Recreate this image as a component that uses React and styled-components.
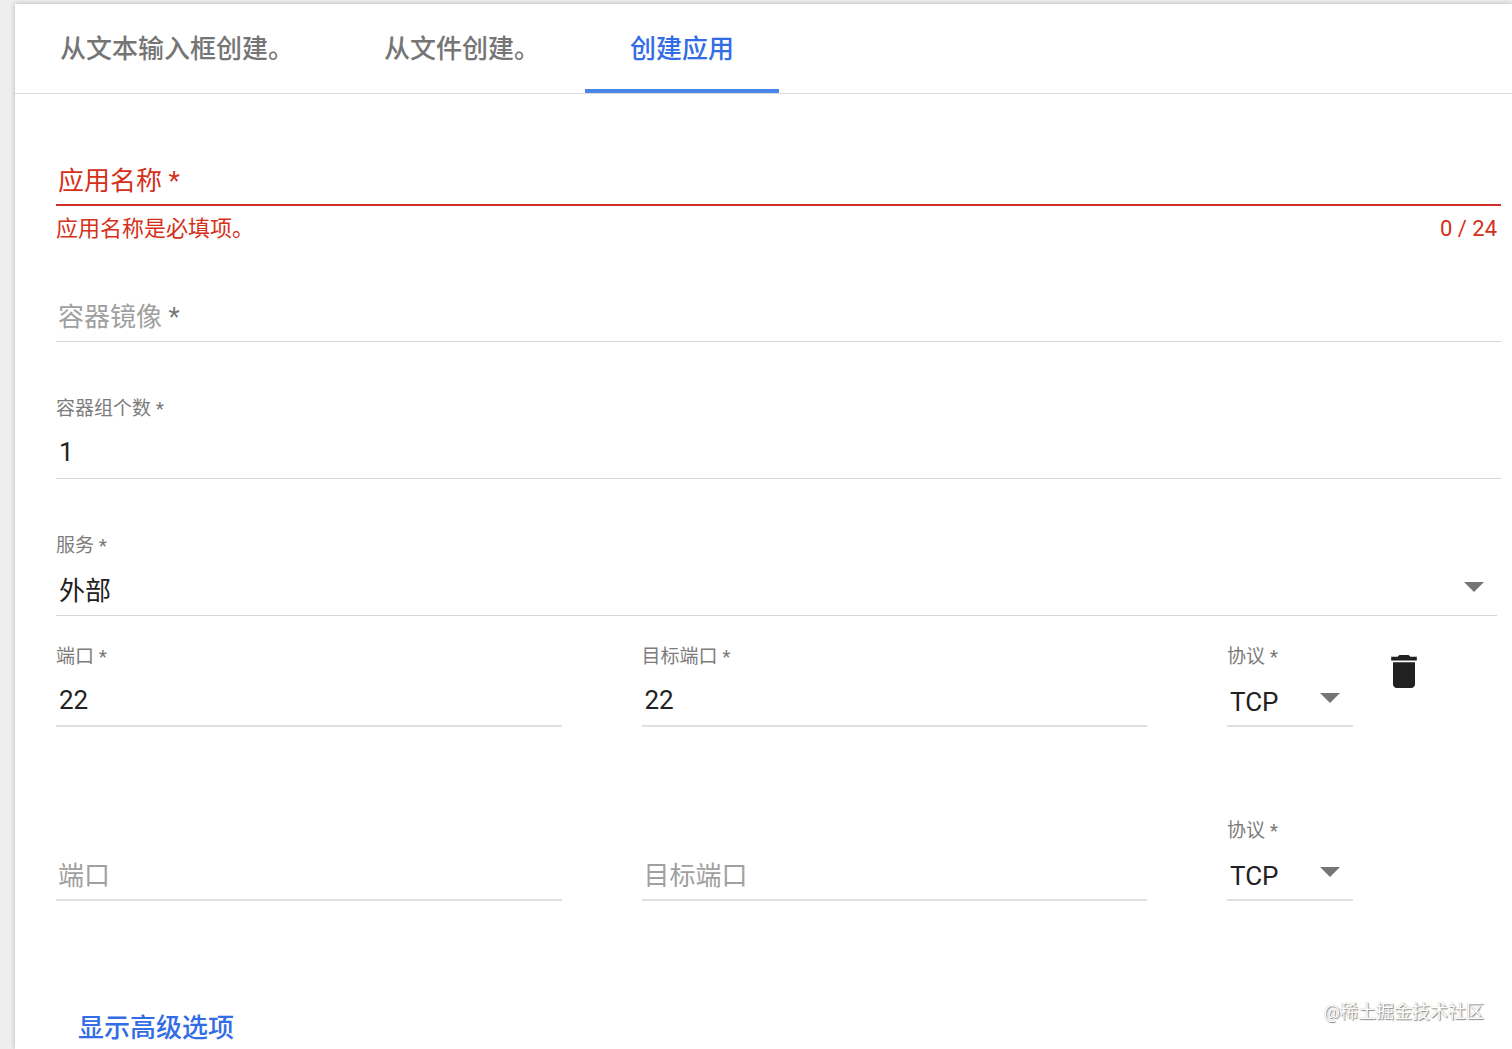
import React, { useState } from "react";
import styled, { createGlobalStyle, css } from "styled-components";

const GlobalStyle = createGlobalStyle`
  *, *::before, *::after { box-sizing: border-box; }
  body {
    margin: 0;
    background: #eeeeee;
    color: #212121;
    font-family: Roboto, "Noto Sans CJK SC", sans-serif;
    font-size: 26px;
  }
  button, input, select { font: inherit; color: inherit; }
`;

const Page = styled.div`
  display: flex;
  flex-direction: column;
  min-height: 100vh;
  padding: 4px 0 0 15px;
`;

const Card = styled.main`
  flex: 1;
  background: #ffffff;
  box-shadow: 0 0 5px rgba(0, 0, 0, 0.25);
`;

const Tabs = styled.nav`
  display: flex;
  border-bottom: 1px solid #dcdcdc;
`;

const Tab = styled.button`
  height: 89px;
  padding: 4px 45px 0;
  border: 0;
  border-bottom: 4px solid ${(p) => (p.$active ? "#4a86e8" : "transparent")};
  background: none;
  color: ${(p) => (p.$active ? "#326de6" : "#757575")};
  font-weight: 500;
  line-height: 40px;
  white-space: nowrap;
  cursor: pointer;
`;

const Form = styled.form`
  padding: 29px 11px 0 41px;
`;

const Field = styled.div`
  margin-right: ${(p) => p.$inset || 0}px;
`;

const Box = styled.div`
  display: grid;
  grid-template-rows: 36px 40px;
  padding-bottom: ${(p) => (p.$thick ? 5 : 6)}px;
  border-bottom: ${(p) => (p.$thick ? 2 : 1)}px solid ${(p) => (p.$thick ? "#e0e0e0" : "#d6d6d6")};
  ${(p) => p.$invalid && css`border-bottom-color: #d0302a;`}
`;

const Label = styled.label`
  grid-area: 1 / 1;
  color: #7c7c7c;
  font-size: 19px;
  line-height: 26px;
  white-space: nowrap;
  ${(p) =>
    p.$resting &&
    css`
      grid-area: 2 / 1;
      padding-left: 2px;
      color: ${p.$invalid ? "#d4301a" : "#a0a0a0"};
      font-size: 26px;
      line-height: 44px;
      pointer-events: none;
    `}
`;

const Star = styled.span`
  color: ${(p) => (p.$invalid ? "inherit" : "#777777")};
`;

const controlStyle = css`
  grid-area: 2 / 1;
  width: 100%;
  min-width: 0;
  height: 40px;
  padding: 0 3px;
  border: 0;
  outline: 0;
  border-radius: 0;
  background: transparent;
`;

const Input = styled.input`
  ${controlStyle}
`;

const Select = styled.select`
  ${controlStyle}
  padding-top: 4px;
  appearance: none;
`;

const Arrow = styled.svg`
  grid-area: 2 / 1;
  place-self: center end;
  width: 20px;
  height: 10px;
  margin: 0 13px 4px 0;
  fill: #757575;
  pointer-events: none;
`;

const Subscript = styled.div`
  display: flex;
  justify-content: space-between;
  height: ${(p) => p.$space}px;
  padding: 8px 4px 0 0;
  color: #d4301a;
  font-size: 22px;
  line-height: 30px;
`;

const PortRow = styled.div`
  display: grid;
  grid-template-columns: 1fr 1fr 274px;
  column-gap: 80px;
`;

const ProtocolCell = styled.div`
  display: grid;
  grid-template-columns: 126px auto;
  justify-content: start;
  align-items: start;
  column-gap: 38px;
`;

const IconButton = styled.button`
  display: flex;
  margin-top: 11px;
  padding: 0;
  border: 0;
  background: none;
  cursor: pointer;

  svg {
    width: 26px;
    height: 33px;
    fill: #212121;
  }
`;

const Footer = styled.footer`
  display: flex;
  justify-content: space-between;
  align-items: flex-start;
  padding: 7px 17px 0 22px;
`;

const AdvancedButton = styled.button`
  margin-top: 8px;
  padding: 0;
  border: 0;
  background: none;
  color: #326de6;
  font-weight: 500;
  line-height: 40px;
  cursor: pointer;
`;

const Credit = styled.span`
  color: #ffffff;
  font-size: 18px;
  line-height: 24px;
  text-shadow: 1px 1px 1px #888888, 0 0 1px #aaaaaa;
`;

function FieldLabel({ id, text, required, resting, invalid }) {
  return (
    <Label htmlFor={id} $resting={resting} $invalid={invalid}>
      {text}
      {required && <Star $invalid={invalid}> *</Star>}
    </Label>
  );
}

function TextField({ id, label, required, initial = "", thick, space, error, max }) {
  const [value, setValue] = useState(initial);
  const resting = value === "";
  const invalid = Boolean(error) && resting;
  return (
    <Field>
      <Box $invalid={invalid} $thick={thick || invalid}>
        <Input id={id} value={value} maxLength={max} onChange={(e) => setValue(e.target.value)} />
        <FieldLabel id={id} text={label} required={required} resting={resting} invalid={invalid} />
      </Box>
      <Subscript $space={space}>
        {invalid && <span>{error}</span>}
        {max && <span>{value.length} / {max}</span>}
      </Subscript>
    </Field>
  );
}

function SelectField({ id, label, options, thick, space, inset }) {
  return (
    <Field $inset={inset}>
      <Box $thick={thick}>
        <FieldLabel id={id} text={label} required />
        <Select id={id}>
          {options.map((o) => (
            <option key={o}>{o}</option>
          ))}
        </Select>
        <Arrow viewBox="0 0 20 10" aria-hidden="true">
          <path d="M0 0h20L10 10z" />
        </Arrow>
      </Box>
      <Subscript $space={space} />
    </Field>
  );
}

function PortMapping({ index, port, required, space, onDelete }) {
  return (
    <PortRow>
      <TextField id={`port-${index}`} label="端口" initial={port} required={required} thick space={space} />
      <TextField id={`target-${index}`} label="目标端口" initial={port} required={required} thick space={space} />
      <ProtocolCell>
        <SelectField id={`protocol-${index}`} label="协议" options={["TCP", "UDP"]} thick space={space} />
        {onDelete && (
          <IconButton type="button" aria-label="删除" onClick={onDelete}>
            <svg viewBox="5 3 14 18">
              <path d="M6 19c0 1.1.9 2 2 2h8c1.1 0 2-.9 2-2V7H6v12zM19 4h-3.5l-1-1h-5l-1 1H5v2h14V4z" />
            </svg>
          </IconButton>
        )}
      </ProtocolCell>
    </PortRow>
  );
}

const TABS = ["从文本输入框创建。", "从文件创建。", "创建应用"];

export default function App() {
  const [tab, setTab] = useState(2);
  const [mapped, setMapped] = useState(true);
  return (
    <>
      <GlobalStyle />
      <Page>
        <Card>
          <Tabs>
            {TABS.map((name, i) => (
              <Tab key={name} type="button" $active={i === tab} onClick={() => setTab(i)}>
                {name}
              </Tab>
            ))}
          </Tabs>
          <Form>
            <TextField id="name" label="应用名称" required space={53} error="应用名称是必填项。" max={24} />
            <TextField id="image" label="容器镜像" required space={54} />
            <TextField id="replicas" label="容器组个数" required initial="1" space={54} />
            <SelectField id="service" label="服务" options={["外部", "内部"]} space={28} inset={4} />
            {mapped && (
              <PortMapping index={0} port="22" required space={91} onDelete={() => setMapped(false)} />
            )}
            <PortMapping index={1} port="" space={92} />
            <Footer>
              <AdvancedButton type="button">显示高级选项</AdvancedButton>
              <Credit>@稀土掘金技术社区</Credit>
            </Footer>
          </Form>
        </Card>
      </Page>
    </>
  );
}
